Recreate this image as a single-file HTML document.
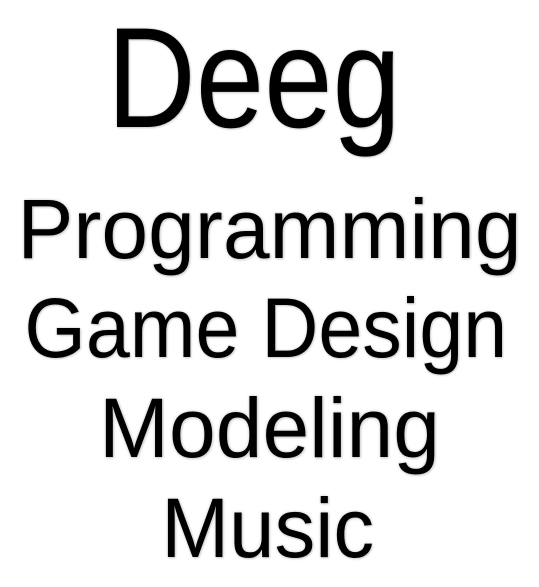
<!DOCTYPE html>
<html><head><meta charset="utf-8"><style>
html,body{margin:0;padding:0;background:#fff;width:539px;height:587px;overflow:hidden}
.l{position:absolute;left:0;width:539px;text-align:center;font-family:"Liberation Sans",sans-serif;color:#000;line-height:1;white-space:nowrap;
text-shadow:0 0 2px #d8d8d8,0 0 3px #d8d8d8,1px 1px 2px #ccc}
.s{font-size:84px}
</style></head><body>
<div class="l" style="top:7px;font-size:143px;left:-16px"><span style="display:inline-block;transform:scaleX(0.86)">Deeg</span></div>
<div class="l s" style="top:187px">Programming</div>
<div class="l s" style="top:286px;left:-4px"><span style="display:inline-block;transform:scaleX(0.94)">Game Design</span></div>
<div class="l s" style="top:386px">Modeling</div>
<div class="l s" style="top:486px;left:-2px"><span style="display:inline-block;transform:scaleX(0.97)">Music</span></div>
</body></html>
